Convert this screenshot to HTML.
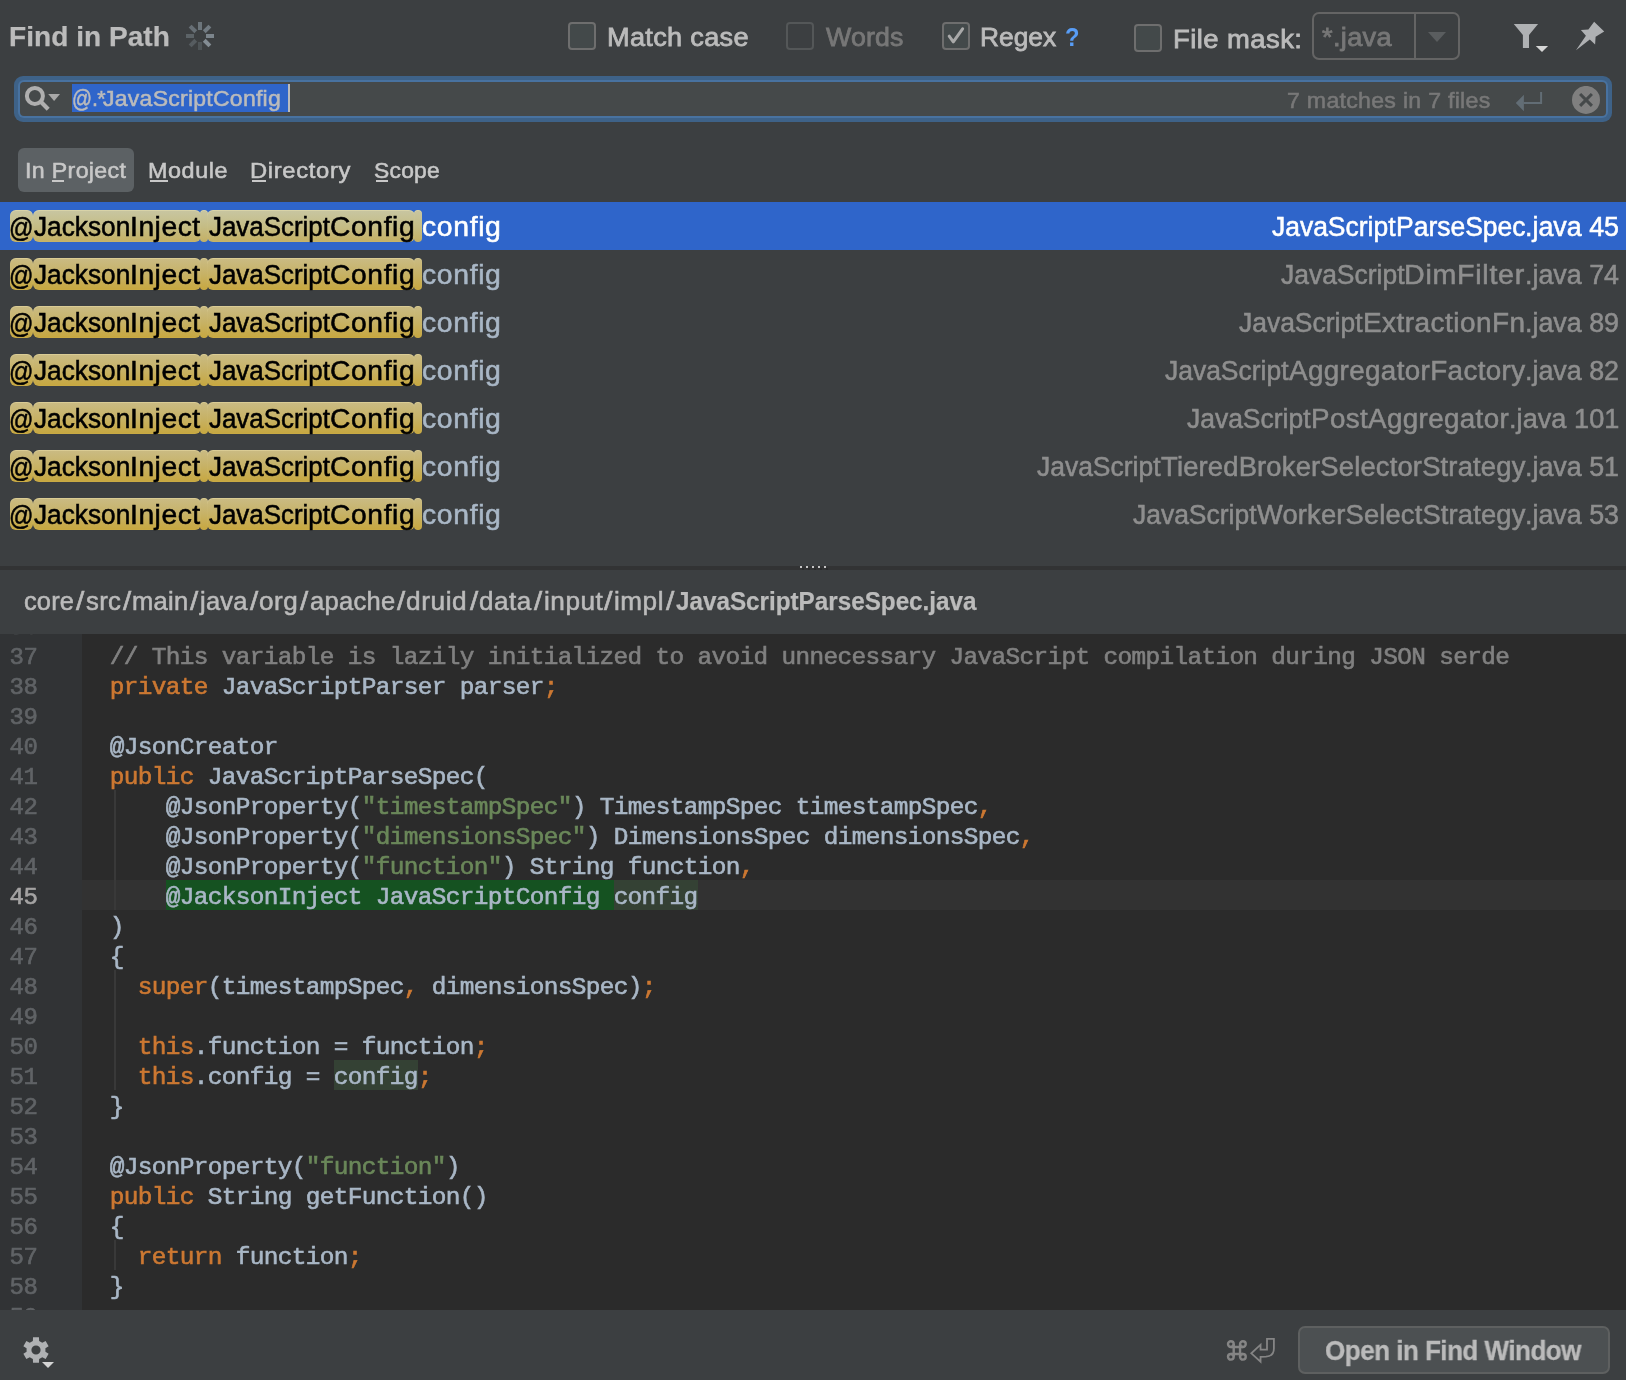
<!DOCTYPE html>
<html><head><meta charset="utf-8"><title>Find in Path</title><style>
html,body{margin:0;padding:0}
body{width:1626px;height:1380px;background:#3c3f41;position:relative;overflow:hidden;font-family:"Liberation Sans",sans-serif}
#root{position:absolute;left:0;top:0;width:1626px;height:1380px;will-change:transform;transform:translateZ(0)}
.t{position:absolute;white-space:pre;line-height:1;font-family:"Liberation Sans",sans-serif;transform-origin:0 50%}
.hl{position:absolute;height:32px;border-radius:6px;box-shadow:inset 0 1px 0 rgba(255,245,190,.28),inset 0 0 0 1px rgba(255,235,150,.05)}
#code{position:absolute;left:0;top:634px;width:1626px;height:676px;background:#2b2b2b;overflow:hidden}
#gutter{position:absolute;left:0;top:0;width:82px;height:100%;background:#313335}
.c,.ln{position:absolute;white-space:pre;line-height:1;font-family:"Liberation Mono",monospace;font-size:24.4px;letter-spacing:-0.642px;-webkit-text-stroke:0.62px}
.ln{left:9.5px;font-size:24px;letter-spacing:-0.4px}
</style></head>
<body><div id="root">
<div style="position:absolute;left:0px;top:202px;width:1626px;height:48px;background:#2f65ca;"></div>
<div class="hl" style="left:10px;top:210px;width:23.0px;background:linear-gradient(#c8c6a2 0%, #c5bd86 50%, #c4b064 100%)"></div>
<div class="hl" style="left:32.6px;top:210px;width:168.0px;background:linear-gradient(#c8c6a2 0%, #c5bd86 50%, #c4b064 100%)"></div>
<div class="hl" style="left:200.1px;top:210px;width:7.8px;background:linear-gradient(#c8c6a2 0%, #c5bd86 50%, #c4b064 100%)"></div>
<div class="hl" style="left:207.4px;top:210px;width:207.3px;background:linear-gradient(#c8c6a2 0%, #c5bd86 50%, #c4b064 100%)"></div>
<div class="hl" style="left:414.2px;top:210px;width:7.8px;background:linear-gradient(#c8c6a2 0%, #c5bd86 50%, #c4b064 100%)"></div>
<div class="hl" style="left:10px;top:258px;width:23.0px;background:linear-gradient(#cabb84 0%, #c7b266 50%, #c7a73f 100%)"></div>
<div class="hl" style="left:32.6px;top:258px;width:168.0px;background:linear-gradient(#cabb84 0%, #c7b266 50%, #c7a73f 100%)"></div>
<div class="hl" style="left:200.1px;top:258px;width:7.8px;background:linear-gradient(#cabb84 0%, #c7b266 50%, #c7a73f 100%)"></div>
<div class="hl" style="left:207.4px;top:258px;width:207.3px;background:linear-gradient(#cabb84 0%, #c7b266 50%, #c7a73f 100%)"></div>
<div class="hl" style="left:414.2px;top:258px;width:7.8px;background:linear-gradient(#cabb84 0%, #c7b266 50%, #c7a73f 100%)"></div>
<div class="hl" style="left:10px;top:306px;width:23.0px;background:linear-gradient(#cabb84 0%, #c7b266 50%, #c7a73f 100%)"></div>
<div class="hl" style="left:32.6px;top:306px;width:168.0px;background:linear-gradient(#cabb84 0%, #c7b266 50%, #c7a73f 100%)"></div>
<div class="hl" style="left:200.1px;top:306px;width:7.8px;background:linear-gradient(#cabb84 0%, #c7b266 50%, #c7a73f 100%)"></div>
<div class="hl" style="left:207.4px;top:306px;width:207.3px;background:linear-gradient(#cabb84 0%, #c7b266 50%, #c7a73f 100%)"></div>
<div class="hl" style="left:414.2px;top:306px;width:7.8px;background:linear-gradient(#cabb84 0%, #c7b266 50%, #c7a73f 100%)"></div>
<div class="hl" style="left:10px;top:354px;width:23.0px;background:linear-gradient(#cabb84 0%, #c7b266 50%, #c7a73f 100%)"></div>
<div class="hl" style="left:32.6px;top:354px;width:168.0px;background:linear-gradient(#cabb84 0%, #c7b266 50%, #c7a73f 100%)"></div>
<div class="hl" style="left:200.1px;top:354px;width:7.8px;background:linear-gradient(#cabb84 0%, #c7b266 50%, #c7a73f 100%)"></div>
<div class="hl" style="left:207.4px;top:354px;width:207.3px;background:linear-gradient(#cabb84 0%, #c7b266 50%, #c7a73f 100%)"></div>
<div class="hl" style="left:414.2px;top:354px;width:7.8px;background:linear-gradient(#cabb84 0%, #c7b266 50%, #c7a73f 100%)"></div>
<div class="hl" style="left:10px;top:402px;width:23.0px;background:linear-gradient(#cabb84 0%, #c7b266 50%, #c7a73f 100%)"></div>
<div class="hl" style="left:32.6px;top:402px;width:168.0px;background:linear-gradient(#cabb84 0%, #c7b266 50%, #c7a73f 100%)"></div>
<div class="hl" style="left:200.1px;top:402px;width:7.8px;background:linear-gradient(#cabb84 0%, #c7b266 50%, #c7a73f 100%)"></div>
<div class="hl" style="left:207.4px;top:402px;width:207.3px;background:linear-gradient(#cabb84 0%, #c7b266 50%, #c7a73f 100%)"></div>
<div class="hl" style="left:414.2px;top:402px;width:7.8px;background:linear-gradient(#cabb84 0%, #c7b266 50%, #c7a73f 100%)"></div>
<div class="hl" style="left:10px;top:450px;width:23.0px;background:linear-gradient(#cabb84 0%, #c7b266 50%, #c7a73f 100%)"></div>
<div class="hl" style="left:32.6px;top:450px;width:168.0px;background:linear-gradient(#cabb84 0%, #c7b266 50%, #c7a73f 100%)"></div>
<div class="hl" style="left:200.1px;top:450px;width:7.8px;background:linear-gradient(#cabb84 0%, #c7b266 50%, #c7a73f 100%)"></div>
<div class="hl" style="left:207.4px;top:450px;width:207.3px;background:linear-gradient(#cabb84 0%, #c7b266 50%, #c7a73f 100%)"></div>
<div class="hl" style="left:414.2px;top:450px;width:7.8px;background:linear-gradient(#cabb84 0%, #c7b266 50%, #c7a73f 100%)"></div>
<div class="hl" style="left:10px;top:498px;width:23.0px;background:linear-gradient(#cabb84 0%, #c7b266 50%, #c7a73f 100%)"></div>
<div class="hl" style="left:32.6px;top:498px;width:168.0px;background:linear-gradient(#cabb84 0%, #c7b266 50%, #c7a73f 100%)"></div>
<div class="hl" style="left:200.1px;top:498px;width:7.8px;background:linear-gradient(#cabb84 0%, #c7b266 50%, #c7a73f 100%)"></div>
<div class="hl" style="left:207.4px;top:498px;width:207.3px;background:linear-gradient(#cabb84 0%, #c7b266 50%, #c7a73f 100%)"></div>
<div class="hl" style="left:414.2px;top:498px;width:7.8px;background:linear-gradient(#cabb84 0%, #c7b266 50%, #c7a73f 100%)"></div>
<svg style="position:absolute;left:184px;top:20px" width="32" height="32" viewBox="-16 -16 32 32"><rect x="-2" y="-14" width="4" height="8" fill="#6c757b" transform="rotate(0)"/><rect x="-2" y="-14" width="4" height="8" fill="#727b82" transform="rotate(45)"/><rect x="-2" y="-14" width="4" height="8" fill="#7c858c" transform="rotate(90)"/><rect x="-2" y="-14" width="4" height="8" fill="#848d94" transform="rotate(135)"/><rect x="-2" y="-14" width="4" height="8" fill="#4f5558" transform="rotate(180)"/><rect x="-2" y="-14" width="4" height="8" fill="#565c60" transform="rotate(225)"/><rect x="-2" y="-14" width="4" height="8" fill="#5c6367" transform="rotate(270)"/><rect x="-2" y="-14" width="4" height="8" fill="#676f75" transform="rotate(315)"/></svg>
<div style="position:absolute;left:568px;top:22px;width:28px;height:28px;box-sizing:border-box;border:2px solid #6e6e6e;background:#43494a;border-radius:4px"></div>
<div style="position:absolute;left:786px;top:22px;width:28px;height:28px;box-sizing:border-box;border:2px solid #545758;background:#3c3f41;border-radius:4px"></div>
<div style="position:absolute;left:942px;top:22px;width:28px;height:28px;box-sizing:border-box;border:2px solid #6e6e6e;background:#43494a;border-radius:4px"></div><svg style="position:absolute;left:942px;top:22px" width="28" height="28" viewBox="0 0 28 28"><path d="M7.2 14.2 L11.3 19.8 L20.6 6.8" fill="none" stroke="#a9a9a9" stroke-width="3" stroke-linecap="round" stroke-linejoin="round"/></svg>
<div style="position:absolute;left:1134px;top:24px;width:28px;height:28px;box-sizing:border-box;border:2px solid #6e6e6e;background:#43494a;border-radius:4px"></div>
<div style="position:absolute;left:1312px;top:12px;width:148px;height:48px;box-sizing:border-box;border:2px solid #646464;border-radius:7px"></div>
<div style="position:absolute;left:1414px;top:14px;width:2px;height:44px;background:#646464;"></div>
<svg style="position:absolute;left:1426px;top:30px" width="22" height="14" viewBox="0 0 22 14"><path d="M2 2 L20 2 L11 12 Z" fill="#5a5d5f"/></svg>
<svg style="position:absolute;left:1510px;top:20px" width="42" height="36" viewBox="0 0 42 36"><path d="M3.8 3.9 L28.05 3.9 L19 15.05 L19 28 L12.9 28 L12.9 15.05 Z" fill="#afb1b3"/><path d="M25.8 25.9 L38.1 25.9 L32 32.1 Z" fill="#d6d6d6"/></svg>
<svg style="position:absolute;left:1572px;top:18px" width="36" height="36" viewBox="0 0 36 36"><path fill="#afb1b3" d="M22.15 3.65 L32.2 13.4 L23.6 18.8 L23.1 26.6 L17.8 21.5 L4 32.2 L13.9 17.7 L8.9 12.1 L16.4 11.6 Z"/></svg>
<div style="position:absolute;left:14px;top:76px;width:1597.7px;height:46px;box-sizing:border-box;border-radius:9px;background:#3e6288"></div>
<div style="position:absolute;left:17.8px;top:79.8px;width:1590.4px;height:38.4px;box-sizing:border-box;border-radius:6px;background:#4872a0"></div>
<div style="position:absolute;left:20px;top:82px;width:1586px;height:34px;box-sizing:border-box;border-radius:4px;background:#45494a"></div>
<div style="position:absolute;left:72px;top:84px;width:216px;height:28px;background:#2f65ca;"></div>
<div style="position:absolute;left:288.2px;top:84px;width:1.8px;height:28px;background:#bbbbbb;"></div>
<svg style="position:absolute;left:22px;top:82px" width="42" height="34" viewBox="0 0 42 34"><circle cx="12.9" cy="13.9" r="8" fill="none" stroke="#afafaf" stroke-width="4"/><path d="M18.6 19.6 L26.2 27.2" stroke="#afafaf" stroke-width="4.2" stroke-linecap="butt"/><path d="M26.2 12 L38 12 L32.1 19 Z" fill="#a8a8a8"/></svg>
<svg style="position:absolute;left:1514px;top:90px" width="30" height="24" viewBox="0 0 30 24"><path d="M27.1 1.9 L27.1 13 L9.5 13" fill="none" stroke="#626d75" stroke-width="2"/><path d="M1.8 13 L9.9 4.8 L9.9 21.2 Z" fill="#626d75"/></svg>
<svg style="position:absolute;left:1572px;top:86px" width="28" height="28" viewBox="0 0 28 28"><circle cx="14" cy="13.9" r="14" fill="#7f7f7f"/><path d="M8.1 8 L19.9 19.8 M19.9 8 L8.1 19.8" stroke="#45494a" stroke-width="3.1"/></svg>
<div style="position:absolute;left:18px;top:148px;width:116px;height:44px;border-radius:6px;background:#5c6164"></div>
<div style="position:absolute;left:52px;top:180px;width:12px;height:2px;background:#c8c8c8;"></div>
<div style="position:absolute;left:150.2px;top:180px;width:17.400000000000006px;height:2px;background:#c8c8c8;"></div>
<div style="position:absolute;left:252.2px;top:180px;width:14.300000000000011px;height:2px;background:#c8c8c8;"></div>
<div style="position:absolute;left:375.8px;top:180px;width:12.199999999999989px;height:2px;background:#c8c8c8;"></div>
<svg style="position:absolute;left:20px;top:1334px" width="40" height="40" viewBox="0 0 40 40"><path fill-rule="evenodd" d="M12.87 6.92 L13.03 3.14 L18.97 3.14 L19.13 6.92 L22.30 8.75 L25.65 7.00 L28.62 12.14 L25.42 14.17 L25.42 17.83 L28.62 19.86 L25.65 25.00 L22.30 23.25 L19.13 25.08 L18.97 28.86 L13.03 28.86 L12.87 25.08 L9.70 23.25 L6.35 25.00 L3.38 19.86 L6.58 17.83 L6.58 14.17 L3.38 12.14 L6.35 7.00 L9.70 8.75 Z M20.6 16 A4.6 4.6 0 1 0 11.4 16 A4.6 4.6 0 1 0 20.6 16 Z" fill="#afb1b3"/><path d="M22 28 L34 28 L28 34 Z" fill="#d4d4d4"/></svg>
<svg style="position:absolute;left:1224px;top:1336px" width="54" height="28" viewBox="0 0 54 28"><g fill="none" stroke="#858585" stroke-width="2.4"><circle cx="6.85" cy="8.1" r="2.85"/><circle cx="18.9" cy="8.1" r="2.85"/><circle cx="6.85" cy="20.8" r="2.85"/><circle cx="18.9" cy="20.8" r="2.85"/><path d="M9.7 8.1 L9.7 20.8 M16.05 8.1 L16.05 20.8 M6.85 10.95 L18.9 10.95 M6.85 17.95 L18.9 17.95"/></g><path fill="none" stroke="#858585" stroke-width="1.8" stroke-linejoin="miter" d="M43 2.9 L43 13.7 L36.55 13.7 L36.55 8.7 L27.3 17.3 L36.55 25.7 L36.55 20.8 L42 20.6 Q49.9 20 49.9 12.5 L49.9 2.9 Z"/></svg>
<div style="position:absolute;left:1298px;top:1326px;width:312px;height:48px;box-sizing:border-box;border:2px solid #5e6060;border-radius:7px;background:#4c5052"></div>
<div style="position:absolute;left:0px;top:566px;width:1626px;height:4px;background:#323334;"></div>
<div style="position:absolute;left:801.5px;top:567.5px;width:2px;height:2px;background:#2a2b2c;"></div><div style="position:absolute;left:800px;top:566px;width:2px;height:2px;background:#c6c6c6;"></div><div style="position:absolute;left:807.5px;top:567.5px;width:2px;height:2px;background:#2a2b2c;"></div><div style="position:absolute;left:806px;top:566px;width:2px;height:2px;background:#c6c6c6;"></div><div style="position:absolute;left:813.5px;top:567.5px;width:2px;height:2px;background:#2a2b2c;"></div><div style="position:absolute;left:812px;top:566px;width:2px;height:2px;background:#c6c6c6;"></div><div style="position:absolute;left:819.5px;top:567.5px;width:2px;height:2px;background:#2a2b2c;"></div><div style="position:absolute;left:818px;top:566px;width:2px;height:2px;background:#c6c6c6;"></div><div style="position:absolute;left:825.5px;top:567.5px;width:2px;height:2px;background:#2a2b2c;"></div><div style="position:absolute;left:824px;top:566px;width:2px;height:2px;background:#c6c6c6;"></div>
<div id="code"><div id="gutter"></div>
<div style="position:absolute;left:82px;top:246px;width:1544px;height:30px;background:#323232;"></div>
<div style="position:absolute;left:166px;top:246px;width:448.0px;height:30px;background:#155221;"></div>
<div style="position:absolute;left:614.0px;top:246px;width:84.0px;height:30px;background:#344134;"></div>
<div style="position:absolute;left:334.0px;top:426px;width:84.0px;height:30px;background:#344134;"></div>
<div style="position:absolute;left:114px;top:156px;width:2px;height:120px;background:#393939;"></div>
<div style="position:absolute;left:114px;top:336px;width:2px;height:120px;background:#393939;"></div>
<div style="position:absolute;left:114px;top:606px;width:2px;height:30px;background:#393939;"></div>
<span class="ln" style="top:-18px;color:#606366">36</span>
<span class="ln" style="top:12px;color:#606366">37</span>
<span class="c" style="left:109.80px;top:12.00px;color:#808080">// This variable is lazily initialized to avoid unnecessary JavaScript compilation during JSON serde</span>
<span class="ln" style="top:42px;color:#606366">38</span>
<span class="c" style="left:109.80px;top:42.00px;color:#cc7832">private </span>
<span class="c" style="left:221.80px;top:42.00px;color:#a9b7c6">JavaScriptParser parser</span>
<span class="c" style="left:543.80px;top:42.00px;color:#cc7832">;</span>
<span class="ln" style="top:72px;color:#606366">39</span>
<span class="ln" style="top:102px;color:#606366">40</span>
<span class="c" style="left:109.80px;top:102.00px;color:#a9b7c6">@JsonCreator</span>
<span class="ln" style="top:132px;color:#606366">41</span>
<span class="c" style="left:109.80px;top:132.00px;color:#cc7832">public </span>
<span class="c" style="left:207.80px;top:132.00px;color:#a9b7c6">JavaScriptParseSpec(</span>
<span class="ln" style="top:162px;color:#606366">42</span>
<span class="c" style="left:165.80px;top:162.00px;color:#a9b7c6">@JsonProperty(</span>
<span class="c" style="left:361.80px;top:162.00px;color:#6a8759">&quot;timestampSpec&quot;</span>
<span class="c" style="left:571.80px;top:162.00px;color:#a9b7c6">) TimestampSpec timestampSpec</span>
<span class="c" style="left:977.80px;top:162.00px;color:#cc7832">,</span>
<span class="ln" style="top:192px;color:#606366">43</span>
<span class="c" style="left:165.80px;top:192.00px;color:#a9b7c6">@JsonProperty(</span>
<span class="c" style="left:361.80px;top:192.00px;color:#6a8759">&quot;dimensionsSpec&quot;</span>
<span class="c" style="left:585.80px;top:192.00px;color:#a9b7c6">) DimensionsSpec dimensionsSpec</span>
<span class="c" style="left:1019.80px;top:192.00px;color:#cc7832">,</span>
<span class="ln" style="top:222px;color:#606366">44</span>
<span class="c" style="left:165.80px;top:222.00px;color:#a9b7c6">@JsonProperty(</span>
<span class="c" style="left:361.80px;top:222.00px;color:#6a8759">&quot;function&quot;</span>
<span class="c" style="left:501.80px;top:222.00px;color:#a9b7c6">) String function</span>
<span class="c" style="left:739.80px;top:222.00px;color:#cc7832">,</span>
<span class="ln" style="top:252px;color:#a4a3a3">45</span>
<span class="c" style="left:165.80px;top:252.00px;color:#a9b7c6">@JacksonInject JavaScriptConfig config</span>
<span class="ln" style="top:282px;color:#606366">46</span>
<span class="c" style="left:109.80px;top:282.00px;color:#a9b7c6">)</span>
<span class="ln" style="top:312px;color:#606366">47</span>
<span class="c" style="left:109.80px;top:312.00px;color:#a9b7c6">{</span>
<span class="ln" style="top:342px;color:#606366">48</span>
<span class="c" style="left:137.80px;top:342.00px;color:#cc7832">super</span>
<span class="c" style="left:207.80px;top:342.00px;color:#a9b7c6">(timestampSpec</span>
<span class="c" style="left:403.80px;top:342.00px;color:#cc7832">,</span>
<span class="c" style="left:431.80px;top:342.00px;color:#a9b7c6">dimensionsSpec)</span>
<span class="c" style="left:641.80px;top:342.00px;color:#cc7832">;</span>
<span class="ln" style="top:372px;color:#606366">49</span>
<span class="ln" style="top:402px;color:#606366">50</span>
<span class="c" style="left:137.80px;top:402.00px;color:#cc7832">this</span>
<span class="c" style="left:193.80px;top:402.00px;color:#a9b7c6">.function = function</span>
<span class="c" style="left:473.80px;top:402.00px;color:#cc7832">;</span>
<span class="ln" style="top:432px;color:#606366">51</span>
<span class="c" style="left:137.80px;top:432.00px;color:#cc7832">this</span>
<span class="c" style="left:193.80px;top:432.00px;color:#a9b7c6">.config = config</span>
<span class="c" style="left:417.80px;top:432.00px;color:#cc7832">;</span>
<span class="ln" style="top:462px;color:#606366">52</span>
<span class="c" style="left:109.80px;top:462.00px;color:#a9b7c6">}</span>
<span class="ln" style="top:492px;color:#606366">53</span>
<span class="ln" style="top:522px;color:#606366">54</span>
<span class="c" style="left:109.80px;top:522.00px;color:#a9b7c6">@JsonProperty(</span>
<span class="c" style="left:305.80px;top:522.00px;color:#6a8759">&quot;function&quot;</span>
<span class="c" style="left:445.80px;top:522.00px;color:#a9b7c6">)</span>
<span class="ln" style="top:552px;color:#606366">55</span>
<span class="c" style="left:109.80px;top:552.00px;color:#cc7832">public </span>
<span class="c" style="left:207.80px;top:552.00px;color:#a9b7c6">String getFunction()</span>
<span class="ln" style="top:582px;color:#606366">56</span>
<span class="c" style="left:109.80px;top:582.00px;color:#a9b7c6">{</span>
<span class="ln" style="top:612px;color:#606366">57</span>
<span class="c" style="left:137.80px;top:612.00px;color:#cc7832">return </span>
<span class="c" style="left:235.80px;top:612.00px;color:#a9b7c6">function</span>
<span class="c" style="left:347.80px;top:612.00px;color:#cc7832">;</span>
<span class="ln" style="top:642px;color:#606366">58</span>
<span class="c" style="left:109.80px;top:642.00px;color:#a9b7c6">}</span>
<span class="ln" style="top:672px;color:#606366">59</span>
</div>
<span class="t" style="left:8.60px;top:23px;font-size:28px;color:#bbbbbb;font-weight:700;letter-spacing:0.028px;transform:scaleX(1.0021);-webkit-text-stroke:0.25px #bbbbbb;">Find in Path</span>
<span class="t" style="left:606.60px;top:24px;font-size:26.5px;color:#bbbbbb;font-weight:400;letter-spacing:0.316px;transform:scaleX(1.0233);-webkit-text-stroke:0.8px #bbbbbb;">Match case</span>
<span class="t" style="left:825.50px;top:24px;font-size:26.5px;color:#777777;font-weight:400;letter-spacing:0.140px;transform:scaleX(1.0092);-webkit-text-stroke:0.8px #777777;">Words</span>
<span class="t" style="left:980.40px;top:24px;font-size:26.5px;color:#bbbbbb;font-weight:400;letter-spacing:0.000px;transform:scaleX(0.9934);-webkit-text-stroke:0.8px #bbbbbb;">Regex</span>
<span class="t" style="left:1064.50px;top:25px;font-size:25px;color:#589df6;font-weight:700;letter-spacing:0.000px;transform:scaleX(0.9489);-webkit-text-stroke:0px #589df6;">?</span>
<span class="t" style="left:1172.80px;top:26px;font-size:26.5px;color:#bbbbbb;font-weight:400;letter-spacing:0.425px;transform:scaleX(1.0352);-webkit-text-stroke:0.8px #bbbbbb;">File mask:</span>
<span class="t" style="left:1322.00px;top:24px;font-size:26.5px;color:#777777;font-weight:400;letter-spacing:0.304px;transform:scaleX(1.0275);-webkit-text-stroke:0.8px #777777;">*.java</span>
<span class="t" style="left:72.00px;top:88px;font-size:23.5px;color:#bbbbbb;font-weight:400;letter-spacing:0.000px;transform:scaleX(0.8382);-webkit-text-stroke:0.55px #bbbbbb;">@</span>
<span class="t" style="left:91.50px;top:88px;font-size:22.5px;color:#bbbbbb;font-weight:400;letter-spacing:-0.771px;transform:scaleX(0.9500);-webkit-text-stroke:0.55px #bbbbbb;">.*</span>
<span class="t" style="left:103.30px;top:88px;font-size:22.5px;color:#bbbbbb;font-weight:400;letter-spacing:0.243px;transform:scaleX(1.0234);-webkit-text-stroke:0.55px #bbbbbb;">JavaScriptConfig </span>
<span class="t" style="left:1287.00px;top:90px;font-size:22.5px;color:#787878;font-weight:400;letter-spacing:0.269px;transform:scaleX(1.0279);-webkit-text-stroke:0.55px #787878;">7 matches in 7 files</span>
<span class="t" style="left:25.20px;top:160px;font-size:22.4px;color:#c8c8c8;font-weight:400;letter-spacing:0.330px;transform:scaleX(1.0348);-webkit-text-stroke:0.55px #c8c8c8;">In Project</span>
<span class="t" style="left:148.20px;top:160px;font-size:22.4px;color:#c8c8c8;font-weight:400;letter-spacing:0.543px;transform:scaleX(1.0444);-webkit-text-stroke:0.55px #c8c8c8;">Module</span>
<span class="t" style="left:250.20px;top:160px;font-size:22.4px;color:#c8c8c8;font-weight:400;letter-spacing:0.616px;transform:scaleX(1.0618);-webkit-text-stroke:0.55px #c8c8c8;">Directory</span>
<span class="t" style="left:374.30px;top:160px;font-size:22.4px;color:#c8c8c8;font-weight:400;letter-spacing:0.248px;transform:scaleX(1.0195);-webkit-text-stroke:0.55px #c8c8c8;">Scope</span>
<span class="t" style="left:9.30px;top:213px;font-size:28.5px;color:#000000;font-weight:400;letter-spacing:0.000px;transform:scaleX(0.8467);-webkit-text-stroke:0.55px #000000;">@</span>
<span class="t" style="left:33.50px;top:214px;font-size:27px;color:#000000;font-weight:400;letter-spacing:0.000px;transform:scaleX(0.9721);-webkit-text-stroke:0.55px #000000;">Jackson</span>
<span class="t" style="left:129.80px;top:214px;font-size:27px;color:#000000;font-weight:400;letter-spacing:0.501px;transform:scaleX(1.0466);-webkit-text-stroke:0.55px #000000;">Inject</span>
<span class="t" style="left:208.50px;top:214px;font-size:27px;color:#000000;font-weight:400;letter-spacing:0.000px;transform:scaleX(0.9598);-webkit-text-stroke:0.55px #000000;">JavaScript</span>
<span class="t" style="left:329.50px;top:214px;font-size:27px;color:#000000;font-weight:400;letter-spacing:0.591px;transform:scaleX(1.0454);-webkit-text-stroke:0.55px #000000;">Config</span>
<span class="t" style="left:422.00px;top:214px;font-size:27px;color:#ffffff;font-weight:400;letter-spacing:0.605px;transform:scaleX(1.0503);-webkit-text-stroke:0.55px #ffffff;">config</span>
<span class="t" style="left:1272.00px;top:214px;font-size:27px;color:#ffffff;font-weight:400;letter-spacing:0.000px;transform:scaleX(0.9797);-webkit-text-stroke:0.55px #ffffff;">JavaScript</span>
<span class="t" style="left:1395.50px;top:214px;font-size:27px;color:#ffffff;font-weight:400;letter-spacing:0.000px;transform:scaleX(0.9805);-webkit-text-stroke:0.55px #ffffff;">ParseSpec</span>
<span class="t" style="left:1525.00px;top:214px;font-size:27px;color:#ffffff;font-weight:400;letter-spacing:0.000px;transform:scaleX(0.9939);-webkit-text-stroke:0.55px #ffffff;">.java 45</span>
<span class="t" style="left:9.30px;top:261px;font-size:28.5px;color:#000000;font-weight:400;letter-spacing:0.000px;transform:scaleX(0.8467);-webkit-text-stroke:0.55px #000000;">@</span>
<span class="t" style="left:33.50px;top:262px;font-size:27px;color:#000000;font-weight:400;letter-spacing:0.000px;transform:scaleX(0.9721);-webkit-text-stroke:0.55px #000000;">Jackson</span>
<span class="t" style="left:129.80px;top:262px;font-size:27px;color:#000000;font-weight:400;letter-spacing:0.501px;transform:scaleX(1.0466);-webkit-text-stroke:0.55px #000000;">Inject</span>
<span class="t" style="left:208.50px;top:262px;font-size:27px;color:#000000;font-weight:400;letter-spacing:0.000px;transform:scaleX(0.9598);-webkit-text-stroke:0.55px #000000;">JavaScript</span>
<span class="t" style="left:329.50px;top:262px;font-size:27px;color:#000000;font-weight:400;letter-spacing:0.591px;transform:scaleX(1.0454);-webkit-text-stroke:0.55px #000000;">Config</span>
<span class="t" style="left:422.00px;top:262px;font-size:27px;color:#a9b7c6;font-weight:400;letter-spacing:0.605px;transform:scaleX(1.0503);-webkit-text-stroke:0.55px #a9b7c6;">config</span>
<span class="t" style="left:1280.50px;top:262px;font-size:27px;color:#8e8e8e;font-weight:400;letter-spacing:0.000px;transform:scaleX(0.9797);-webkit-text-stroke:0.55px #8e8e8e;">JavaScript</span>
<span class="t" style="left:1404.00px;top:262px;font-size:27px;color:#8e8e8e;font-weight:400;letter-spacing:0.702px;transform:scaleX(1.0585);-webkit-text-stroke:0.55px #8e8e8e;">DimFilter</span>
<span class="t" style="left:1525.00px;top:262px;font-size:27px;color:#8e8e8e;font-weight:400;letter-spacing:0.000px;transform:scaleX(0.9939);-webkit-text-stroke:0.55px #8e8e8e;">.java 74</span>
<span class="t" style="left:9.30px;top:309px;font-size:28.5px;color:#000000;font-weight:400;letter-spacing:0.000px;transform:scaleX(0.8467);-webkit-text-stroke:0.55px #000000;">@</span>
<span class="t" style="left:33.50px;top:310px;font-size:27px;color:#000000;font-weight:400;letter-spacing:0.000px;transform:scaleX(0.9721);-webkit-text-stroke:0.55px #000000;">Jackson</span>
<span class="t" style="left:129.80px;top:310px;font-size:27px;color:#000000;font-weight:400;letter-spacing:0.501px;transform:scaleX(1.0466);-webkit-text-stroke:0.55px #000000;">Inject</span>
<span class="t" style="left:208.50px;top:310px;font-size:27px;color:#000000;font-weight:400;letter-spacing:0.000px;transform:scaleX(0.9598);-webkit-text-stroke:0.55px #000000;">JavaScript</span>
<span class="t" style="left:329.50px;top:310px;font-size:27px;color:#000000;font-weight:400;letter-spacing:0.591px;transform:scaleX(1.0454);-webkit-text-stroke:0.55px #000000;">Config</span>
<span class="t" style="left:422.00px;top:310px;font-size:27px;color:#a9b7c6;font-weight:400;letter-spacing:0.605px;transform:scaleX(1.0503);-webkit-text-stroke:0.55px #a9b7c6;">config</span>
<span class="t" style="left:1239.00px;top:310px;font-size:27px;color:#8e8e8e;font-weight:400;letter-spacing:0.000px;transform:scaleX(0.9797);-webkit-text-stroke:0.55px #8e8e8e;">JavaScript</span>
<span class="t" style="left:1362.50px;top:310px;font-size:27px;color:#8e8e8e;font-weight:400;letter-spacing:0.448px;transform:scaleX(1.0355);-webkit-text-stroke:0.55px #8e8e8e;">ExtractionFn</span>
<span class="t" style="left:1525.00px;top:310px;font-size:27px;color:#8e8e8e;font-weight:400;letter-spacing:0.000px;transform:scaleX(0.9939);-webkit-text-stroke:0.55px #8e8e8e;">.java 89</span>
<span class="t" style="left:9.30px;top:357px;font-size:28.5px;color:#000000;font-weight:400;letter-spacing:0.000px;transform:scaleX(0.8467);-webkit-text-stroke:0.55px #000000;">@</span>
<span class="t" style="left:33.50px;top:358px;font-size:27px;color:#000000;font-weight:400;letter-spacing:0.000px;transform:scaleX(0.9721);-webkit-text-stroke:0.55px #000000;">Jackson</span>
<span class="t" style="left:129.80px;top:358px;font-size:27px;color:#000000;font-weight:400;letter-spacing:0.501px;transform:scaleX(1.0466);-webkit-text-stroke:0.55px #000000;">Inject</span>
<span class="t" style="left:208.50px;top:358px;font-size:27px;color:#000000;font-weight:400;letter-spacing:0.000px;transform:scaleX(0.9598);-webkit-text-stroke:0.55px #000000;">JavaScript</span>
<span class="t" style="left:329.50px;top:358px;font-size:27px;color:#000000;font-weight:400;letter-spacing:0.591px;transform:scaleX(1.0454);-webkit-text-stroke:0.55px #000000;">Config</span>
<span class="t" style="left:422.00px;top:358px;font-size:27px;color:#a9b7c6;font-weight:400;letter-spacing:0.605px;transform:scaleX(1.0503);-webkit-text-stroke:0.55px #a9b7c6;">config</span>
<span class="t" style="left:1165.00px;top:358px;font-size:27px;color:#8e8e8e;font-weight:400;letter-spacing:0.000px;transform:scaleX(0.9797);-webkit-text-stroke:0.55px #8e8e8e;">JavaScript</span>
<span class="t" style="left:1288.50px;top:358px;font-size:27px;color:#8e8e8e;font-weight:400;letter-spacing:0.374px;transform:scaleX(1.0284);-webkit-text-stroke:0.55px #8e8e8e;">AggregatorFactory</span>
<span class="t" style="left:1525.00px;top:358px;font-size:27px;color:#8e8e8e;font-weight:400;letter-spacing:0.000px;transform:scaleX(0.9939);-webkit-text-stroke:0.55px #8e8e8e;">.java 82</span>
<span class="t" style="left:9.30px;top:405px;font-size:28.5px;color:#000000;font-weight:400;letter-spacing:0.000px;transform:scaleX(0.8467);-webkit-text-stroke:0.55px #000000;">@</span>
<span class="t" style="left:33.50px;top:406px;font-size:27px;color:#000000;font-weight:400;letter-spacing:0.000px;transform:scaleX(0.9721);-webkit-text-stroke:0.55px #000000;">Jackson</span>
<span class="t" style="left:129.80px;top:406px;font-size:27px;color:#000000;font-weight:400;letter-spacing:0.501px;transform:scaleX(1.0466);-webkit-text-stroke:0.55px #000000;">Inject</span>
<span class="t" style="left:208.50px;top:406px;font-size:27px;color:#000000;font-weight:400;letter-spacing:0.000px;transform:scaleX(0.9598);-webkit-text-stroke:0.55px #000000;">JavaScript</span>
<span class="t" style="left:329.50px;top:406px;font-size:27px;color:#000000;font-weight:400;letter-spacing:0.591px;transform:scaleX(1.0454);-webkit-text-stroke:0.55px #000000;">Config</span>
<span class="t" style="left:422.00px;top:406px;font-size:27px;color:#a9b7c6;font-weight:400;letter-spacing:0.605px;transform:scaleX(1.0503);-webkit-text-stroke:0.55px #a9b7c6;">config</span>
<span class="t" style="left:1187.00px;top:406px;font-size:27px;color:#8e8e8e;font-weight:400;letter-spacing:0.000px;transform:scaleX(0.9797);-webkit-text-stroke:0.55px #8e8e8e;">JavaScript</span>
<span class="t" style="left:1310.50px;top:406px;font-size:27px;color:#8e8e8e;font-weight:400;letter-spacing:0.369px;transform:scaleX(1.0275);-webkit-text-stroke:0.55px #8e8e8e;">PostAggregator</span>
<span class="t" style="left:1508.60px;top:406px;font-size:27px;color:#8e8e8e;font-weight:400;letter-spacing:0.045px;transform:scaleX(1.0037);-webkit-text-stroke:0.55px #8e8e8e;">.java 101</span>
<span class="t" style="left:9.30px;top:453px;font-size:28.5px;color:#000000;font-weight:400;letter-spacing:0.000px;transform:scaleX(0.8467);-webkit-text-stroke:0.55px #000000;">@</span>
<span class="t" style="left:33.50px;top:454px;font-size:27px;color:#000000;font-weight:400;letter-spacing:0.000px;transform:scaleX(0.9721);-webkit-text-stroke:0.55px #000000;">Jackson</span>
<span class="t" style="left:129.80px;top:454px;font-size:27px;color:#000000;font-weight:400;letter-spacing:0.501px;transform:scaleX(1.0466);-webkit-text-stroke:0.55px #000000;">Inject</span>
<span class="t" style="left:208.50px;top:454px;font-size:27px;color:#000000;font-weight:400;letter-spacing:0.000px;transform:scaleX(0.9598);-webkit-text-stroke:0.55px #000000;">JavaScript</span>
<span class="t" style="left:329.50px;top:454px;font-size:27px;color:#000000;font-weight:400;letter-spacing:0.591px;transform:scaleX(1.0454);-webkit-text-stroke:0.55px #000000;">Config</span>
<span class="t" style="left:422.00px;top:454px;font-size:27px;color:#a9b7c6;font-weight:400;letter-spacing:0.605px;transform:scaleX(1.0503);-webkit-text-stroke:0.55px #a9b7c6;">config</span>
<span class="t" style="left:1037.00px;top:454px;font-size:27px;color:#8e8e8e;font-weight:400;letter-spacing:0.000px;transform:scaleX(0.9797);-webkit-text-stroke:0.55px #8e8e8e;">JavaScript</span>
<span class="t" style="left:1160.50px;top:454px;font-size:27px;color:#8e8e8e;font-weight:400;letter-spacing:0.175px;transform:scaleX(1.0138);-webkit-text-stroke:0.55px #8e8e8e;">TieredBrokerSelectorStrategy</span>
<span class="t" style="left:1525.00px;top:454px;font-size:27px;color:#8e8e8e;font-weight:400;letter-spacing:0.000px;transform:scaleX(0.9939);-webkit-text-stroke:0.55px #8e8e8e;">.java 51</span>
<span class="t" style="left:9.30px;top:501px;font-size:28.5px;color:#000000;font-weight:400;letter-spacing:0.000px;transform:scaleX(0.8467);-webkit-text-stroke:0.55px #000000;">@</span>
<span class="t" style="left:33.50px;top:502px;font-size:27px;color:#000000;font-weight:400;letter-spacing:0.000px;transform:scaleX(0.9721);-webkit-text-stroke:0.55px #000000;">Jackson</span>
<span class="t" style="left:129.80px;top:502px;font-size:27px;color:#000000;font-weight:400;letter-spacing:0.501px;transform:scaleX(1.0466);-webkit-text-stroke:0.55px #000000;">Inject</span>
<span class="t" style="left:208.50px;top:502px;font-size:27px;color:#000000;font-weight:400;letter-spacing:0.000px;transform:scaleX(0.9598);-webkit-text-stroke:0.55px #000000;">JavaScript</span>
<span class="t" style="left:329.50px;top:502px;font-size:27px;color:#000000;font-weight:400;letter-spacing:0.591px;transform:scaleX(1.0454);-webkit-text-stroke:0.55px #000000;">Config</span>
<span class="t" style="left:422.00px;top:502px;font-size:27px;color:#a9b7c6;font-weight:400;letter-spacing:0.605px;transform:scaleX(1.0503);-webkit-text-stroke:0.55px #a9b7c6;">config</span>
<span class="t" style="left:1133.00px;top:502px;font-size:27px;color:#8e8e8e;font-weight:400;letter-spacing:0.000px;transform:scaleX(0.9797);-webkit-text-stroke:0.55px #8e8e8e;">JavaScript</span>
<span class="t" style="left:1256.50px;top:502px;font-size:27px;color:#8e8e8e;font-weight:400;letter-spacing:0.159px;transform:scaleX(1.0121);-webkit-text-stroke:0.55px #8e8e8e;">WorkerSelectStrategy</span>
<span class="t" style="left:1525.00px;top:502px;font-size:27px;color:#8e8e8e;font-weight:400;letter-spacing:0.000px;transform:scaleX(0.9939);-webkit-text-stroke:0.55px #8e8e8e;">.java 53</span>
<span class="t" style="left:23.90px;top:589px;font-size:25px;color:#bbbbbb;font-weight:400;letter-spacing:0.181px;transform:scaleX(1.0149);-webkit-text-stroke:0.55px #bbbbbb;">core</span>
<span class="t" style="left:76.00px;top:589px;font-size:25px;color:#bbbbbb;font-weight:400;letter-spacing:0.000px;transform:scaleX(1.1937);-webkit-text-stroke:0.55px #bbbbbb;">/</span>
<span class="t" style="left:86.10px;top:589px;font-size:25px;color:#bbbbbb;font-weight:400;letter-spacing:0.308px;transform:scaleX(1.0277);-webkit-text-stroke:0.55px #bbbbbb;">src</span>
<span class="t" style="left:123.30px;top:589px;font-size:25px;color:#bbbbbb;font-weight:400;letter-spacing:0.000px;transform:scaleX(1.1793);-webkit-text-stroke:0.55px #bbbbbb;">/</span>
<span class="t" style="left:131.70px;top:589px;font-size:25px;color:#bbbbbb;font-weight:400;letter-spacing:0.286px;transform:scaleX(1.0211);-webkit-text-stroke:0.55px #bbbbbb;">main</span>
<span class="t" style="left:190.20px;top:589px;font-size:25px;color:#bbbbbb;font-weight:400;letter-spacing:0.000px;transform:scaleX(1.1793);-webkit-text-stroke:0.55px #bbbbbb;">/</span>
<span class="t" style="left:200.30px;top:589px;font-size:25px;color:#bbbbbb;font-weight:400;letter-spacing:0.226px;transform:scaleX(1.0197);-webkit-text-stroke:0.55px #bbbbbb;">java</span>
<span class="t" style="left:250.00px;top:589px;font-size:25px;color:#bbbbbb;font-weight:400;letter-spacing:0.000px;transform:scaleX(1.1793);-webkit-text-stroke:0.55px #bbbbbb;">/</span>
<span class="t" style="left:259.10px;top:589px;font-size:25px;color:#bbbbbb;font-weight:400;letter-spacing:0.516px;transform:scaleX(1.0428);-webkit-text-stroke:0.55px #bbbbbb;">org</span>
<span class="t" style="left:300.40px;top:589px;font-size:25px;color:#bbbbbb;font-weight:400;letter-spacing:0.000px;transform:scaleX(1.1793);-webkit-text-stroke:0.55px #bbbbbb;">/</span>
<span class="t" style="left:309.50px;top:589px;font-size:25px;color:#bbbbbb;font-weight:400;letter-spacing:0.278px;transform:scaleX(1.0203);-webkit-text-stroke:0.55px #bbbbbb;">apache</span>
<span class="t" style="left:396.90px;top:589px;font-size:25px;color:#bbbbbb;font-weight:400;letter-spacing:0.000px;transform:scaleX(1.1793);-webkit-text-stroke:0.55px #bbbbbb;">/</span>
<span class="t" style="left:405.90px;top:589px;font-size:25px;color:#bbbbbb;font-weight:400;letter-spacing:0.557px;transform:scaleX(1.0501);-webkit-text-stroke:0.55px #bbbbbb;">druid</span>
<span class="t" style="left:470.00px;top:589px;font-size:25px;color:#bbbbbb;font-weight:400;letter-spacing:0.000px;transform:scaleX(1.1793);-webkit-text-stroke:0.55px #bbbbbb;">/</span>
<span class="t" style="left:479.20px;top:589px;font-size:25px;color:#bbbbbb;font-weight:400;letter-spacing:0.506px;transform:scaleX(1.0415);-webkit-text-stroke:0.55px #bbbbbb;">data</span>
<span class="t" style="left:534.00px;top:589px;font-size:25px;color:#bbbbbb;font-weight:400;letter-spacing:0.000px;transform:scaleX(1.1793);-webkit-text-stroke:0.55px #bbbbbb;">/</span>
<span class="t" style="left:543.60px;top:589px;font-size:25px;color:#bbbbbb;font-weight:400;letter-spacing:0.506px;transform:scaleX(1.0467);-webkit-text-stroke:0.55px #bbbbbb;">input</span>
<span class="t" style="left:604.00px;top:589px;font-size:25px;color:#bbbbbb;font-weight:400;letter-spacing:0.000px;transform:scaleX(1.2225);-webkit-text-stroke:0.55px #bbbbbb;">/</span>
<span class="t" style="left:614.00px;top:589px;font-size:25px;color:#bbbbbb;font-weight:400;letter-spacing:0.508px;transform:scaleX(1.0443);-webkit-text-stroke:0.55px #bbbbbb;">impl</span>
<span class="t" style="left:666.00px;top:589px;font-size:25px;color:#bbbbbb;font-weight:400;letter-spacing:0.000px;transform:scaleX(1.1937);-webkit-text-stroke:0.55px #bbbbbb;">/</span>
<span class="t" style="left:675.50px;top:589px;font-size:25px;color:#bbbbbb;font-weight:700;letter-spacing:0.000px;transform:scaleX(0.9696);-webkit-text-stroke:0.25px #bbbbbb;">JavaScriptParseSpec.java</span>
<span class="t" style="left:1325.30px;top:1337px;font-size:27.5px;color:#bbbbbb;font-weight:700;letter-spacing:-0.603px;transform:scaleX(0.9500);-webkit-text-stroke:0.3px #bbbbbb;">Open in Find Window</span>
</div></body></html>
